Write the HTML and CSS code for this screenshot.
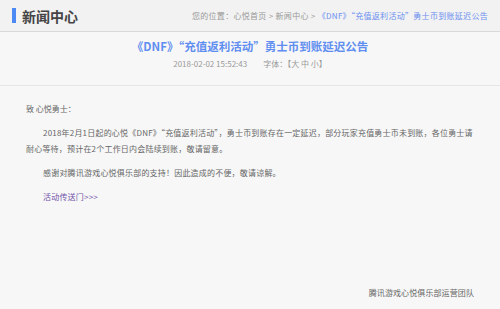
FILE: index.html
```html
<!DOCTYPE html>
<html lang="zh-CN">
<head>
<meta charset="utf-8">
<link rel="stylesheet" href="styles.css">
</head>
<body>
<div class="header">
  <div class="brand"><span class="bar"></span><h1 class="brand-title">新闻中心</h1></div>
  <div class="crumbs">您的位置：心悦首页 &gt; 新闻中心 &gt; <span class="crumb-cur">《DNF》“充值返利活动”勇士币到账延迟公告</span></div>
</div>
<div class="article-head">
  <h2 class="article-title">《DNF》“充值返利活动”勇士币到账延迟公告</h2>
  <div class="meta"><span class="date">2018-02-02 15:52:43</span><span class="fontsize">字体：【大 中 小】</span></div>
</div>
<div class="content">
  <p class="greet">致 心悦勇士：</p>
  <p class="para">2018年2月1日起的心悦《DNF》“充值返利活动”，勇士币到账存在一定延迟，部分玩家充值勇士币未到账，各位勇士请耐心等待，预计在2个工作日内会陆续到账，敬请留意。</p>
  <p class="para">感谢对腾讯游戏心悦俱乐部的支持！因此造成的不便，敬请谅解。</p>
  <p class="para"><a class="link">活动传送门&gt;&gt;&gt;</a></p>
  <p class="sign">腾讯游戏心悦俱乐部运营团队</p>
</div>
</body>
</html>
```
FILE: styles.css
```css
* { box-sizing: border-box; }
html, body { margin: 0; padding: 0; }
body {
  width: 500px;
  height: 309px;
  overflow: hidden;
  background: #f7f7f7;
  font-family: "Noto Sans CJK SC", "Noto Sans", sans-serif;
  color: #666;
}
.header {
  height: 32px;
  background: #f2f2f2;
  border-bottom: 1px solid #d9d9d9;
  display: flex;
  align-items: center;
  justify-content: space-between;
  padding: 0 12px 0 12px;
}
.brand { display: flex; align-items: center; }
.bar { width: 4px; height: 15px; background: #4b8af5; margin-right: 6px; }
.brand-title {
  margin: 0;
  font-size: 14px;
  font-weight: bold;
  color: #444;
  line-height: 20px;
}
.crumbs {
  font-size: 8px;
  color: #999;
  line-height: 12px;
  white-space: nowrap;
  letter-spacing: 0.3px;
}
.crumb-cur { color: #6b8ff0; }
.article-head {
  border-bottom: 1px solid #e6e6e6;
  padding-top: 5px;
  height: 54px;
  text-align: center;
}
.article-title {
  margin: 0;
  font-size: 11.5px;
  font-weight: bold;
  color: #5f8ef0;
  line-height: 18px;
}
.meta {
  margin-top: 3px;
  font-size: 8px;
  color: #999;
  line-height: 12px;
}
.date { margin-right: 16px; }
.content {
  padding: 15px 26px 0 26px;
  font-size: 8px;
  line-height: 16px;
}
.content p { margin: 0; }
.greet { margin-bottom: 8px !important; }
.para { text-indent: 17px; margin-bottom: 8px !important; letter-spacing: 0.2px; }
.link { color: #7051a8; text-decoration: none; }
.sign { text-align: right; margin-top: 80px !important; letter-spacing: 0.1px; }
```
